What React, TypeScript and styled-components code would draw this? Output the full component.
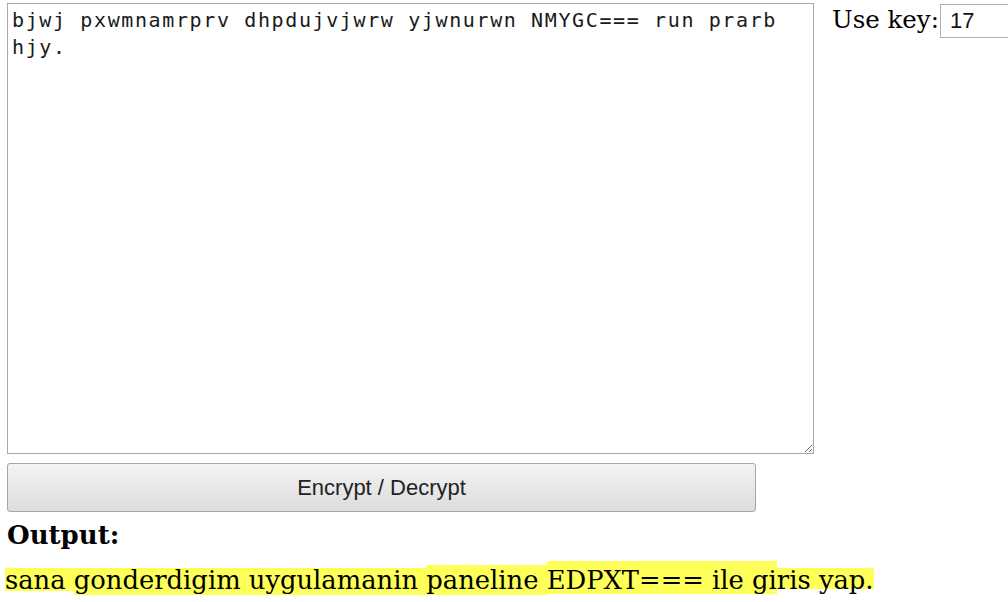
import React from "react";
import styled, { createGlobalStyle } from "styled-components";

const Global = createGlobalStyle`
  html, body { margin: 0; padding: 0; background: #fff; }
  body { font-family: "DejaVu Serif", "Liberation Serif", serif; color: #000; }
`;

const Page = styled.div`
  padding: 3px 0 0 7px;
  width: 1001px;
  overflow: hidden;
`;

const Row = styled.div`
  display: flex;
  align-items: flex-start;
  gap: 18px;
`;

const Editor = styled.textarea`
  flex-shrink: 0;
  box-sizing: border-box;
  width: 807px;
  height: 451px;
  margin: 0;
  padding: 3px 4px;
  border: 1px solid #a9a9a9;
  font-family: "DejaVu Sans Mono", "Liberation Mono", monospace;
  font-size: 20px;
  letter-spacing: 1.62px;
  line-height: 27px;
  color: #1a1a1a;
  background: #fff;
  outline: none;
`;

const KeyGroup = styled.div`
  flex-shrink: 0;
  display: flex;
  align-items: baseline;
  gap: 1px;
  white-space: nowrap;
`;

const Label = styled.label`
  font-size: 24.5px;
  line-height: 34px;
`;

const KeyInput = styled.input`
  box-sizing: border-box;
  width: 80px;
  height: 34px;
  margin: 0;
  padding: 0 9px;
  border: 1px solid #b0b0b0;
  font-family: "Liberation Sans", Arial, sans-serif;
  font-size: 22px;
  color: #111;
  outline: none;
`;

const ActionButton = styled.button`
  display: block;
  box-sizing: border-box;
  width: 749px;
  height: 49px;
  margin: 9px 0 0 0;
  border: 1px solid #a6a6a6;
  border-radius: 3px;
  background: linear-gradient(#f4f4f4, #dcdcdc);
  font-family: "Liberation Sans", Arial, sans-serif;
  font-size: 22px;
  color: #222;
`;

const Heading = styled.div`
  margin-top: 8px;
  font-weight: bold;
  font-size: 26px;
  line-height: 30px;
`;

const OutputLine = styled.div`
  margin-top: 15px;
  margin-left: -2px;
  font-size: 25.8px;
  line-height: 30px;
  white-space: nowrap;
`;

const Mark = styled.span<{ $from: number; $to: number }>`
  padding: 4px 0;
  background: linear-gradient(
    to bottom,
    transparent ${(p) => p.$from}px,
    #ffff5a ${(p) => p.$from}px,
    #ffff5a ${(p) => p.$to}px,
    transparent ${(p) => p.$to}px
  );
`;

export default function App() {
  return (
    <>
      <Global />
      <Page>
        <Row>
          <Editor
            spellCheck={false}
            defaultValue="bjwj pxwmnamrprv dhpdujvjwrw yjwnurwn NMYGC=== run prarb hjy."
          />
          <KeyGroup>
            <Label>Use key:</Label>
            <KeyInput defaultValue="17" />
          </KeyGroup>
        </Row>
        <ActionButton>Encrypt / Decrypt</ActionButton>
        <Heading>Output:</Heading>
        <OutputLine>
          <Mark $from={7} $to={30}>sana </Mark>
          <Mark $from={7} $to={38}>gonderdigim uygulamanin </Mark>
          <Mark $from={4} $to={36}>paneline </Mark>
          <Mark $from={0} $to={33}>EDPXT=== ile gi</Mark>
          <Mark $from={7} $to={28}>ris yap.</Mark>
        </OutputLine>
      </Page>
    </>
  );
}
